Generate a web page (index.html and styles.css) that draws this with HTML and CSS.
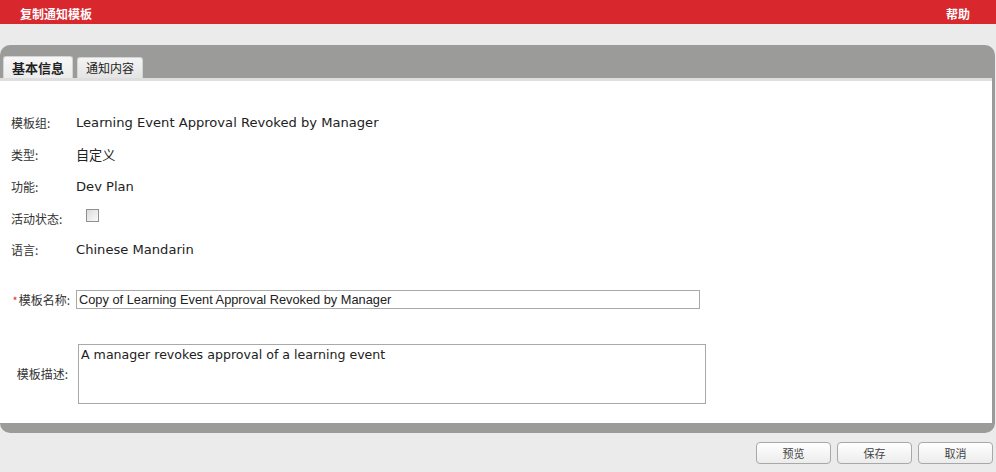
FILE: index.html
```html
<!DOCTYPE html>
<html lang="zh">
<head>
<meta charset="utf-8">
<title>复制通知模板</title>
<link rel="stylesheet" href="styles.css">
</head>
<body>
<div class="topbar">
  <span class="title">复制通知模板</span>
  <span class="help">帮助</span>
</div>
<div class="panel">
  <div class="tabs">
    <div class="tab active">基本信息</div>
    <div class="tab">通知内容</div>
  </div>
  <div class="content">
    <div class="info">
      <div class="row"><span class="label">模板组:</span><span class="value">Learning Event Approval Revoked by Manager</span></div>
      <div class="row"><span class="label">类型:</span><span class="value">自定义</span></div>
      <div class="row"><span class="label">功能:</span><span class="value">Dev Plan</span></div>
      <div class="row"><span class="label">活动状态:</span><span class="value"><span class="checkbox"></span></span></div>
      <div class="row"><span class="label">语言:</span><span class="value">Chinese Mandarin</span></div>
    </div>
    <div class="edit-row name-row">
      <span class="elabel"><span class="req">*</span>模板名称:</span>
      <div class="input">Copy of Learning Event Approval Revoked by Manager</div>
    </div>
    <div class="edit-row desc-row">
      <span class="elabel">模板描述:</span>
      <div class="textarea">A manager revokes approval of a learning event</div>
    </div>
  </div>
</div>
<div class="buttons">
  <div class="btn">预览</div>
  <div class="btn">保存</div>
  <div class="btn">取消</div>
</div>
</body>
</html>
```

FILE: styles.css
```css
html, body {
  margin: 0;
  padding: 0;
}
body {
  background: #ebebeb;
  font-family: "DejaVu Sans", "Noto Sans CJK SC", sans-serif;
  color: #222;
  width: 996px;
  height: 472px;
  overflow: hidden;
}
.topbar {
  height: 24px;
  background: #d9272e;
  color: #fff;
  font-family: "Noto Sans CJK SC", sans-serif;
  font-weight: bold;
  font-size: 12px;
  display: flex;
  align-items: center;
  justify-content: space-between;
  padding: 2px 26px 0 20px;
  box-sizing: border-box;
}
.panel {
  margin: 21px 1px 0 0;
  background: #9b9b99;
  border-radius: 10px;
  padding: 12px 3px 10px 0;
}
.tabs {
  display: flex;
  align-items: flex-end;
  gap: 4px;
  padding-left: 3px;
  height: 21px;
}
.tab {
  font-family: "Noto Sans CJK SC", sans-serif;
  font-size: 12px;
  color: #222;
  height: 20px;
  line-height: 20px;
  padding: 0 8px;
  background: linear-gradient(#f4f4f4, #e4e4e4);
  border: 1px solid #d4d4d4;
  border-bottom: none;
  border-radius: 3px 3px 0 0;
}
.tab.active {
  height: 21px;
  line-height: 21px;
  font-size: 13px;
  font-weight: bold;
  padding: 0 8px;
  background: linear-gradient(#f7f7f7, #ececec);
}
.content {
  background: #fff;
  border-top: 3px solid #dedede;
  height: 345px;
  padding-top: 26px;
  box-sizing: border-box;
}
.row {
  display: flex;
  align-items: center;
  height: 31.75px;
}
.label {
  width: 65px;
  padding-left: 11px;
  font-family: "Noto Sans CJK SC", sans-serif;
  font-size: 12px;
  color: #333;
}
.value {
  font-size: 13.1px;
  color: #222;
  display: flex;
  align-items: center;
}
.checkbox {
  width: 11px;
  height: 11px;
  margin-left: 10px;
  margin-top: -5px;
  border: 1px solid #8f8f8f;
  background: linear-gradient(135deg, #dcdcdc, #fafafa);
}
.edit-row {
  display: flex;
  align-items: center;
}
.name-row {
  margin-top: 24px;
}
.desc-row {
  margin-top: 35px;
}
.elabel {
  width: 70px;
  padding-right: 6px;
  text-align: right;
  font-family: "Noto Sans CJK SC", sans-serif;
  font-size: 12px;
  color: #333;
}
.req {
  color: #e0322c;
  font-size: 11px;
  margin-right: 1px;
}
.input {
  width: 620px;
  height: 17px;
  border: 1px solid #a9a9a9;
  font-family: "Liberation Sans", Arial, sans-serif;
  font-size: 12.8px;
  line-height: 17px;
  padding-left: 2px;
  color: #222;
}
.desc-row .elabel {
  width: 68px;
  padding-right: 10px;
}
.textarea {
  width: 622px;
  height: 54px;
  border: 1px solid #a9a9a9;
  padding: 2px;
  font-size: 12.6px;
  line-height: 16px;
  color: #222;
}
.buttons {
  display: flex;
  justify-content: flex-end;
  gap: 6px;
  margin-top: 9px;
  padding-right: 3px;
}
.btn {
  width: 73px;
  height: 20px;
  line-height: 20px;
  border: 1px solid #a8a8a8;
  border-radius: 4px;
  background: linear-gradient(#ffffff, #ececec);
  text-align: center;
  font-family: "Noto Sans CJK SC", sans-serif;
  font-size: 11px;
  color: #444;
}
```
